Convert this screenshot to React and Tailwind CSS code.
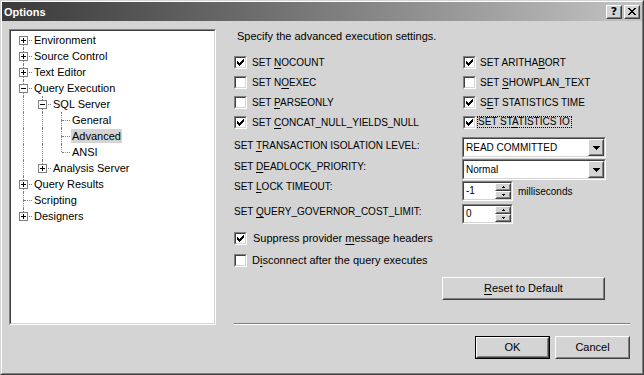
import React from "react"

const tree = [
  { label: "Environment", depth: 0, box: "+", first: true },
  { label: "Source Control", depth: 0, box: "+" },
  { label: "Text Editor", depth: 0, box: "+" },
  { label: "Query Execution", depth: 0, box: "-" },
  { label: "SQL Server", depth: 1, box: "-", anc: [true] },
  { label: "General", depth: 2, anc: [true, true] },
  { label: "Advanced", depth: 2, anc: [true, true], selected: true },
  { label: "ANSI", depth: 2, anc: [true, true], last: true },
  { label: "Analysis Server", depth: 1, box: "+", anc: [true], last: true },
  { label: "Query Results", depth: 0, box: "+" },
  { label: "Scripting", depth: 0 },
  { label: "Designers", depth: 0, box: "+", last: true },
]

// classic 3D frames
const Raised = ({ className = "", children }) => (
  <div className={`border border-t-white border-l-white border-r-[#404040] border-b-[#404040] ${className}`}>
    <div className="h-full w-full border border-t-[#d4d4d4] border-l-[#d4d4d4] border-r-[#808080] border-b-[#808080] flex items-center justify-center bg-[#d4d4d4]">
      {children}
    </div>
  </div>
)

const Sunken = ({ className = "", children, inner = "" }) => (
  <div className={`border border-t-[#808080] border-l-[#808080] border-r-white border-b-white ${className}`}>
    <div className={`h-full w-full border border-t-[#404040] border-l-[#404040] border-r-[#d4d4d4] border-b-[#d4d4d4] bg-white ${inner}`}>
      {children}
    </div>
  </div>
)

const U = ({ children }) => <span className="underline underline-offset-[2px]">{children}</span>

const Check = ({ checked }) => (
  <Sunken className="w-[13px] h-[13px] shrink-0" inner="relative">
    {checked && (
      <svg className="absolute left-[1px] top-[1px]" width="7" height="7" viewBox="0 0 7 7" shapeRendering="crispEdges">
        <path d="M0 2h1v3h-1z M1 3h1v3h-1z M2 4h1v3h-1z M3 3h1v3h-1z M4 2h1v3h-1z M5 1h1v3h-1z M6 0h1v3h-1z" fill="#000" />
      </svg>
    )}
  </Sunken>
)

const DownArrow = () => (
  <svg width="7" height="4" viewBox="0 0 7 4" shapeRendering="crispEdges">
    <path d="M0 0h7v1h-7z M1 1h5v1h-5z M2 2h3v1h-3z M3 3h1v1h-1z" fill="#000" />
  </svg>
)

const Combo = ({ value }) => (
  <Sunken className="w-[144px] h-[21px]" inner="flex items-center">
    <span className="flex-1 pl-[2px] leading-[14px]">{value}</span>
    <Raised className="w-[16px] h-full">
      <DownArrow />
    </Raised>
  </Sunken>
)

const Spin = ({ value }) => (
  <Sunken className="w-[51px] h-[20px]" inner="flex items-center">
    <span className="flex-1 pl-[2px] leading-[14px]">{value}</span>
    <div className="flex flex-col w-[16px] h-full">
      <Raised className="h-1/2 w-full">
        <svg width="3" height="2" viewBox="0 0 3 2" shapeRendering="crispEdges">
          <path d="M1 0h1v1h-1z M0 1h3v1h-3z" fill="#000" />
        </svg>
      </Raised>
      <Raised className="h-1/2 w-full">
        <svg width="3" height="2" viewBox="0 0 3 2" shapeRendering="crispEdges">
          <path d="M0 0h3v1h-3z M1 1h1v1h-1z" fill="#000" />
        </svg>
      </Raised>
    </div>
  </Sunken>
)

const TreeRow = ({ node }) => {
  const anc = node.anc || []
  return (
    <div className="flex h-[16px] items-center">
      {anc.map((on, i) => (
        <span key={i} className="relative w-[19px] h-full shrink-0">
          {on && <span className="absolute left-[9px] top-0 bottom-0 border-l border-dotted border-[#808080]" />}
        </span>
      ))}
      <span className="relative w-[19px] h-full shrink-0">
        {!node.first && <span className="absolute left-[9px] top-0 h-[8px] border-l border-dotted border-[#808080]" />}
        {!node.last && <span className="absolute left-[9px] top-[8px] bottom-0 border-l border-dotted border-[#808080]" />}
        <span className="absolute left-[10px] right-[1px] top-[8px] border-t border-dotted border-[#808080]" />
        {node.box && (
          <span className="absolute left-[5px] top-[4px] w-[9px] h-[9px] bg-white border border-[#808080]">
            <span className="absolute left-[1px] top-[3px] w-[5px] h-px bg-black" />
            {node.box === "+" && <span className="absolute left-[3px] top-[1px] w-px h-[5px] bg-black" />}
          </span>
        )}
      </span>
      <span className={`px-[1px] leading-[14px] whitespace-nowrap ${node.selected ? "bg-[#d4d4d4]" : ""}`}>
        {node.label}
      </span>
    </div>
  )
}

const App = () => {
  return (
    <div className="w-[644px] h-[375px] bg-[#d4d4d4] border border-t-[#d4d4d4] border-l-[#d4d4d4] border-r-[#404040] border-b-[#404040] font-['Liberation_Sans',Arial,sans-serif] text-[10px] text-black overflow-hidden">
      <div className="h-full border border-t-white border-l-white border-r-[#808080] border-b-[#808080] flex flex-col">
        {/* Title bar */}
        <div className="h-[19px] shrink-0 flex items-center justify-between bg-gradient-to-r from-[#3a3a3a] to-[#c4c4c4] pl-[2px] pr-[2px]">
          <span className="text-white font-bold text-[11px] leading-[14px]">Options</span>
          <div className="flex gap-[2px]">
            <Raised className="w-[16px] h-[14px]">
              <span className="font-bold text-[11px] leading-[10px] font-['DejaVu_Sans',sans-serif]">?</span>
            </Raised>
            <Raised className="w-[16px] h-[14px]">
              <svg width="8" height="7" viewBox="0 0 8 7" shapeRendering="crispEdges">
                <path d="M0 0h2v1h-2z M6 0h2v1h-2z M1 1h2v1h-2z M5 1h2v1h-2z M2 2h4v1h-4z M3 3h2v1h-2z M2 4h4v1h-4z M1 5h2v1h-2z M5 5h2v1h-2z M0 6h2v1h-2z M6 6h2v1h-2z" fill="#000" />
              </svg>
            </Raised>
          </div>
        </div>

        {/* Body */}
        <div className="flex pl-[7px] pt-[8px]">
          <Sunken className="w-[207px] h-[296px] shrink-0 text-[11px]" inner="pt-[1px] pl-[3px]">
            {tree.map((n) => (
              <TreeRow key={n.label} node={n} />
            ))}
          </Sunken>

          <div className="ml-[18px] w-[396px] flex flex-col">
            <div className="h-[14px] leading-[14px] pl-[3px] text-[11px]">Specify the advanced execution settings.</div>

            <div className="mt-[9px] grid grid-cols-[229px_1fr]">
              <div className="h-[20px] flex items-center"><Check checked /><span className="ml-[5px]">SET <U>N</U>OCOUNT</span></div>
              <div className="h-[20px] flex items-center"><Check checked /><span className="ml-[4px]">SET ARITHA<U>B</U>ORT</span></div>
              <div className="h-[20px] flex items-center"><Check /><span className="ml-[5px]">SET N<U>O</U>EXEC</span></div>
              <div className="h-[20px] flex items-center"><Check /><span className="ml-[4px]">SET <U>S</U>HOWPLAN_TEXT</span></div>
              <div className="h-[20px] flex items-center"><Check /><span className="ml-[5px]">SET <U>P</U>ARSEONLY</span></div>
              <div className="h-[20px] flex items-center"><Check checked /><span className="ml-[4px]">S<U>E</U>T STATISTICS TIME</span></div>
              <div className="h-[20px] flex items-center"><Check checked /><span className="ml-[5px]">SET <U>C</U>ONCAT_NULL_YIELDS_NULL</span></div>
              <div className="h-[20px] flex items-center"><Check checked /><span className="ml-[1px] border border-dotted border-black leading-[10px] pr-[1px]">SET ST<U>A</U>TISTICS IO</span></div>
            </div>

            <div className="mt-[5px] h-[21px] grid grid-cols-[228px_1fr] items-start">
              <span className="pt-[2px] leading-[14px]">SET <U>T</U>RANSACTION ISOLATION LEVEL:</span>
              <Combo value="READ COMMITTED" />
            </div>
            <div className="mt-[1px] h-[21px] grid grid-cols-[228px_1fr] items-start">
              <span className="pt-[1px] leading-[14px]">SET <U>D</U>EADLOCK_PRIORITY:</span>
              <Combo value="Normal" />
            </div>
            <div className="mt-[1px] h-[20px] grid grid-cols-[228px_1fr] items-start">
              <span className="-mt-[1px] leading-[14px]">SET <U>L</U>OCK TIMEOUT:</span>
              <div className="flex items-center">
                <Spin value="-1" />
                <span className="ml-[5px]">milliseconds</span>
              </div>
            </div>
            <div className="mt-[3px] h-[20px] grid grid-cols-[228px_1fr] items-start">
              <span className="pt-[1px] leading-[14px]">SET <U>Q</U>UERY_GOVERNOR_COST_LIMIT:</span>
              <Spin value="0" />
            </div>

            <div className="mt-[4px] h-[20px] flex items-center text-[11px]">
              <Check checked />
              <span className="ml-[6px]">Suppress provider <U>m</U>essage headers</span>
            </div>
            <div className="mt-[2px] h-[20px] flex items-center text-[11px]">
              <Check />
              <span className="ml-[5px]">D<U>i</U>sconnect after the query executes</span>
            </div>

            <Raised className="mt-[7px] ml-[208px] w-[163px] h-[23px] text-[11px]">
              <span><U>R</U>eset to Default</span>
            </Raised>

            <div className="mt-[23px] h-[2px] border-t border-t-[#808080] border-b border-b-white" />

            <div className="mt-[11px] flex justify-end gap-[5px] text-[11px]">
              <div className="w-[75px] h-[23px] border border-black">
                <Raised className="w-full h-full"><span>OK</span></Raised>
              </div>
              <Raised className="w-[75px] h-[23px]"><span>Cancel</span></Raised>
            </div>
          </div>
        </div>
      </div>
    </div>
  )
}

export default App
